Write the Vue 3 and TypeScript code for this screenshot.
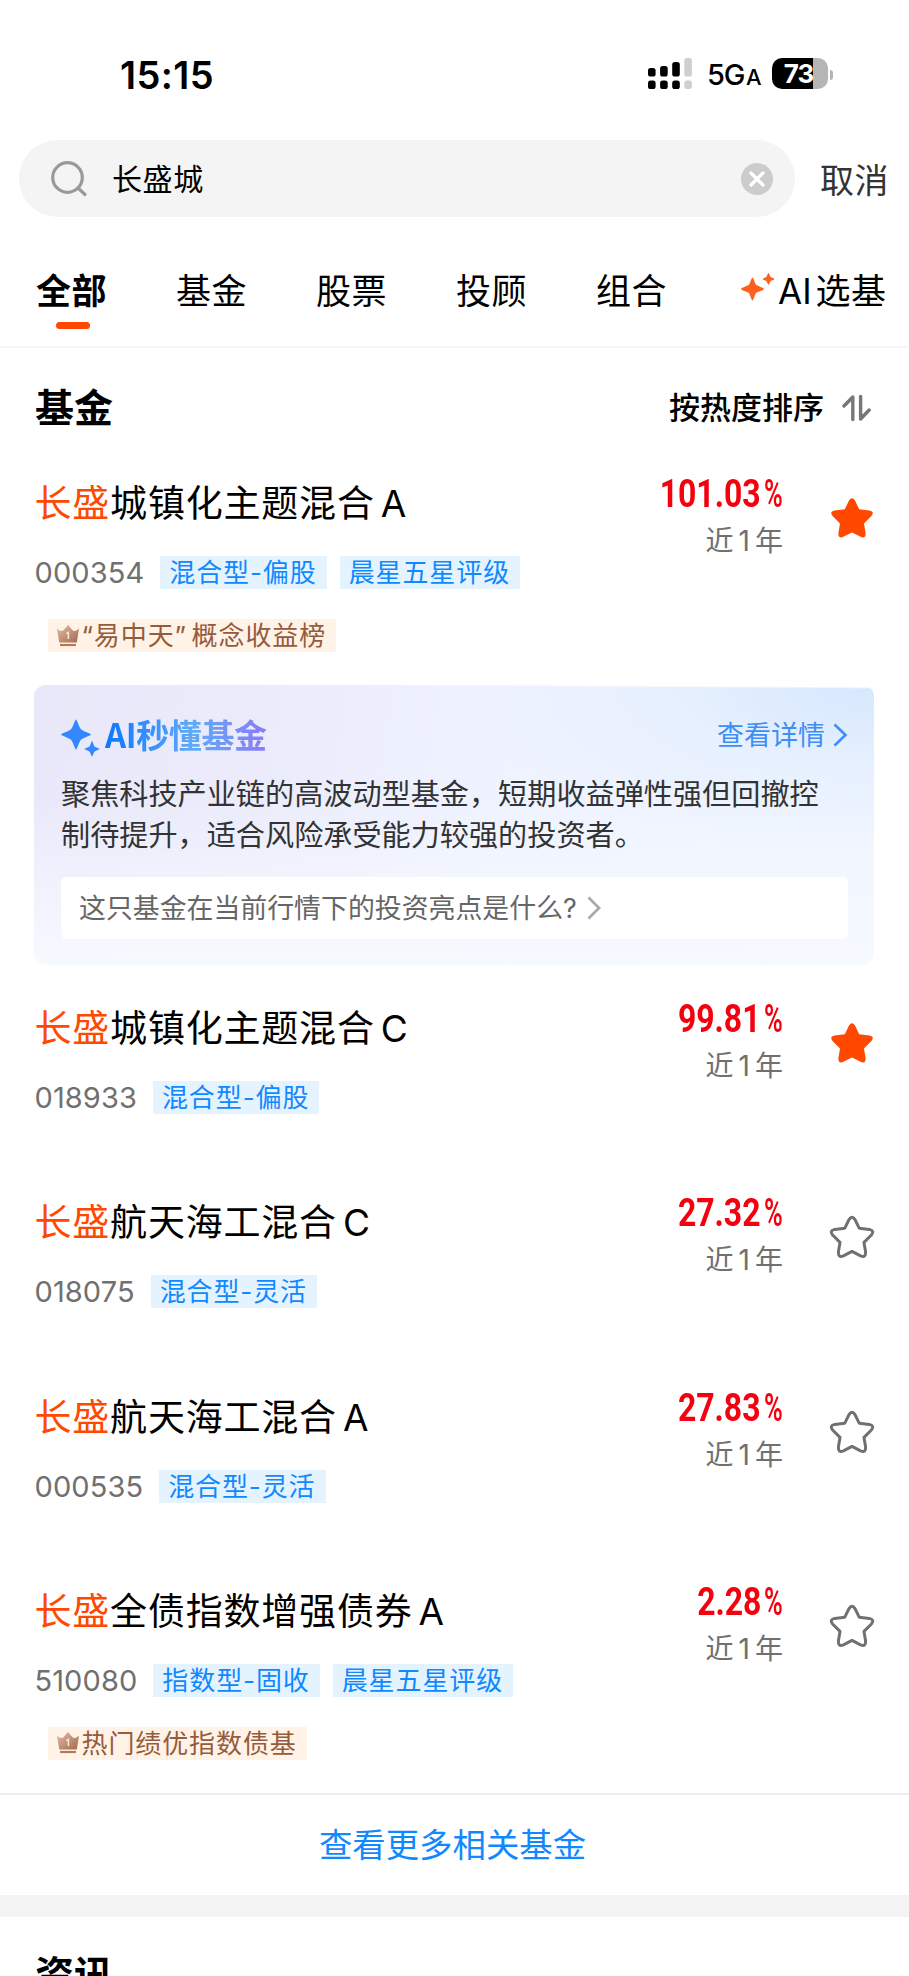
<script setup lang="ts">
interface Fund {
  rest: string
  share: string
  code: string
  tags: string[]
  rank?: string
  value: string
  starred: boolean
  insight?: boolean
}

const tabs: string[] = ['全部', '基金', '股票', '投顾', '组合']

const funds: Fund[] = [
  { rest: '城镇化主题混合', share: 'A', code: '000354', tags: ['混合型-偏股', '晨星五星评级'], rank: '“易中天” 概念收益榜', value: '101.03', starred: true, insight: true },
  { rest: '城镇化主题混合', share: 'C', code: '018933', tags: ['混合型-偏股'], value: '99.81', starred: true },
  { rest: '航天海工混合', share: 'C', code: '018075', tags: ['混合型-灵活'], value: '27.32', starred: false },
  { rest: '航天海工混合', share: 'A', code: '000535', tags: ['混合型-灵活'], value: '27.83', starred: false },
  { rest: '全债指数增强债券', share: 'A', code: '510080', tags: ['指数型-固收', '晨星五星评级'], rank: '热门绩优指数债基', value: '2.28', starred: false },
]

const signal: number[] = [8.5, 10.5, 14.5, 18.5]
</script>

<template>
  <main class="app">
    <header class="status">
      <span class="clock">15:15</span>
      <div class="status-right">
        <svg class="signal" width="45" height="31" viewBox="0 0 45 31">
          <g v-for="(h, i) in signal" :key="i" :fill="i === 3 ? '#cfcfcf' : '#000'">
            <rect :x="i * 12.1" :y="18.5 - h" width="7.6" :height="h" rx="2.6" />
            <rect :x="i * 12.1" y="22.5" width="7.6" height="8.5" rx="2.6" />
          </g>
        </svg>
        <span class="net">5G<small>A</small></span>
        <div class="battery"><span>73</span></div>
        <i class="nub"></i>
      </div>
    </header>

    <div class="search-row">
      <div class="search">
        <svg class="lens" width="38" height="38" viewBox="0 0 38 38" fill="none" stroke="#999" stroke-width="3.2">
          <circle cx="17.5" cy="17.5" r="14.8" />
          <path d="M28 28L35 34.5" stroke-linecap="round" />
        </svg>
        <span class="query">长盛城</span>
        <svg class="clear" width="32" height="32" viewBox="0 0 32 32">
          <circle cx="16" cy="16" r="16" fill="#ccc" />
          <path d="M10 10L22 22M22 10L10 22" stroke="#fff" stroke-width="3.2" stroke-linecap="round" />
        </svg>
      </div>
      <span class="cancel">取消</span>
    </div>

    <nav class="tabs">
      <span v-for="(t, i) in tabs" :key="t" class="tab" :class="{ active: i === 0 }">{{ t }}</span>
      <span class="tab ai-tab">
        <svg width="34" height="30" viewBox="0 0 34 30" fill="#ff5f1f">
          <path d="M11.5 5.5C12.5 5.5 13.9 11.2 15 12.8C16.8 14.1 23 15.8 23 17C23 18.2 16.8 19.8 15 21C13.9 22.7 12.5 28.5 11.5 28.5C10.5 28.5 9.1 22.7 8 21C6.2 19.8 0 18.2 0 17C0 15.8 6.2 14.1 8 12.8C9.1 11.2 10.5 5.5 11.5 5.5Z" />
          <path d="M27.5 1C28 1 29 4 29.7 4.9C30.6 5.6 33.5 6.4 33.5 7C33.5 7.6 30.6 8.3 29.7 9C29 10 28 12.8 27.5 12.8C27 12.8 26 10 25.3 9C24.4 8.3 21.6 7.6 21.6 7C21.6 6.4 24.4 5.6 25.3 4.9C26 4 27 1 27.5 1Z" />
        </svg>
        <span class="latin">AI</span>选基
      </span>
    </nav>

    <section class="head">
      <h2>基金</h2>
      <div class="sort">
        <span>按热度排序</span>
        <svg width="29" height="28" viewBox="0 0 29 28" fill="none" stroke="#777" stroke-width="3.4" stroke-linecap="round" stroke-linejoin="round">
          <path d="M2 12L10.8 3V25.5" />
          <path d="M18.6 2.5V25L27.2 16" />
        </svg>
      </div>
    </section>

    <template v-for="f in funds" :key="f.code">
      <article class="fund" :class="{ ranked: f.rank }">
        <div class="info">
          <h3><em>长盛</em>{{ f.rest }}<b>{{ f.share }}</b></h3>
          <div class="meta">
            <span class="code">{{ f.code }}</span>
            <span v-for="t in f.tags" :key="t" class="tag">{{ t }}</span>
          </div>
          <div v-if="f.rank" class="rank">
            <svg width="22" height="22" viewBox="0 0 22 22">
              <defs>
                <linearGradient :id="'crown' + f.code" x1="0" y1="0" x2="1" y2="1">
                  <stop offset="0" stop-color="#e3bda8" />
                  <stop offset="1" stop-color="#a4694a" />
                </linearGradient>
              </defs>
              <path d="M0 3.5Q3.5 7 6.2 5.6L11 0L15.8 5.6Q18.5 7 22 3.5L19.8 17.4H2.2Z" :fill="'url(#crown' + f.code + ')'" />
              <path d="M3 20H19" stroke="#b27a5c" stroke-width="2.2" />
              <path d="M9.3 8.6L11.4 7.4V14" fill="none" stroke="#f7e6dc" stroke-width="1.6" />
            </svg>
            <span>{{ f.rank }}</span>
          </div>
        </div>
        <div class="gain">
          <div class="pct"><span class="num">{{ f.value }}</span><span class="sign">%</span></div>
          <div class="period">近<i>1</i>年</div>
        </div>
        <svg class="star" width="46" height="44" viewBox="0 0 46 44">
          <path
            d="M20 4.6Q23 -0.2 26 4.6L30.2 13.2L40.4 14.4Q46 15.6 42.4 20L35 27.4L36.6 37Q37 43 31.6 40.8L23 36.4L14.4 40.8Q9 43 9.4 37L11 27.4L3.6 20Q0 15.6 5.6 14.4L15.8 13.2Z"
            :fill="f.starred ? '#ff4800' : 'none'"
            :stroke="f.starred ? 'none' : '#707070'"
            stroke-width="3"
            stroke-linejoin="round"
          />
        </svg>
      </article>

      <section v-if="f.insight" class="card">
        <div class="card-head">
          <svg width="39" height="38" viewBox="0 0 39 38" fill="#3388ff">
            <path d="M15 0.5C16 0.5 18 8 20 10.2C22.2 12.4 30 14.5 30 15.5C30 16.5 22.2 18.6 20 20.8C18 23 16 30.5 15 30.5C14 30.5 12 23 10 20.8C7.8 18.6 0 16.5 0 15.5C0 14.5 7.8 12.4 10 10.2C12 8 14 0.5 15 0.5Z" />
            <path d="M31 22C31.6 22 32.5 26 33.4 27.2C34.4 28.3 38.6 29.3 38.6 30C38.6 30.7 34.4 31.6 33.4 32.7C32.5 33.8 31.6 37.4 31 37.4C30.4 37.4 29.5 33.8 28.6 32.7C27.6 31.6 23.5 30.7 23.5 30C23.5 29.3 27.6 28.3 28.6 27.2C29.5 26 30.4 22 31 22Z" />
          </svg>
          <strong>AI秒懂基金</strong>
          <span class="detail">查看详情</span>
          <svg width="15" height="24" viewBox="0 0 15 24" fill="none" stroke="#3d8ef8" stroke-width="2.6"><path d="M1.5 1.5L12.5 12L1.5 22.5" /></svg>
        </div>
        <p>聚焦科技产业链的高波动型基金，短期收益弹性强但回撤控<br />制待提升，适合风险承受能力较强的投资者。</p>
        <div class="ask">
          <span>这只基金在当前行情下的投资亮点是什么<i>?</i></span>
          <svg width="14" height="24" viewBox="0 0 14 24" fill="none" stroke="#aaa" stroke-width="2.8"><path d="M1.5 1.5L12 12L1.5 22.5" /></svg>
        </div>
      </section>
    </template>

    <div class="more">查看更多相关基金</div>
    <section class="news"><h2>资讯</h2></section>
  </main>
</template>

<style>
body {
  margin: 0;
  background: #fff;
}
</style>

<style scoped>
.app {
  width: 909px;
  height: 1976px;
  overflow: hidden;
  background: #fff;
  color: #000;
  font-family: Inter, "Noto Sans CJK SC", sans-serif;
  display: flex;
  flex-direction: column;
}
.app > * {
  flex-shrink: 0;
  box-sizing: border-box;
}
h2, h3, p {
  margin: 0;
  font-weight: 400;
}
em, i {
  font-style: normal;
}
svg {
  flex: none;
  display: block;
}
.status {
  height: 140px;
  padding: 9px 76px 0 120px;
  display: flex;
  align-items: center;
  justify-content: space-between;
}
.clock {
  font-size: 38px;
  font-weight: 600;
  letter-spacing: 0.4px;
}
.status-right {
  display: flex;
  align-items: center;
}
.signal {
  margin-top: -2px;
}
.net {
  margin-left: 14px;
  width: 65px;
  font-size: 29px;
  font-weight: 500;
  letter-spacing: -1.3px;
  white-space: nowrap;
}
.net small {
  font-size: 22px;
  margin-left: 2px;
}
.battery {
  width: 56px;
  height: 31px;
  margin-top: -2px;
  border-radius: 10px;
  background: linear-gradient(90deg, #000 41px, #b5b5b5 41px);
  color: #fff;
  font-size: 26px;
  font-weight: 700;
  line-height: 31px;
  text-align: center;
  letter-spacing: -1px;
}
.battery span {
  margin-right: 3px;
}
.nub {
  width: 3px;
  height: 10px;
  margin-left: 2px;
  border-radius: 0 4px 4px 0;
  background: #b5b5b5;
}
.search-row {
  height: 77px;
  padding-left: 19px;
  display: flex;
  align-items: center;
}
.search {
  width: 776px;
  height: 77px;
  box-sizing: border-box;
  border-radius: 39px;
  background: #f4f4f4;
  padding: 0 22px 0 31px;
  display: flex;
  align-items: center;
}
.query {
  flex: 1;
  margin: -3px 0 0 24px;
  font-size: 30px;
  letter-spacing: 0.6px;
}
.cancel {
  margin: 0 0 0 25px;
  font-size: 34px;
  color: #333;
  letter-spacing: 0.5px;
}
.tabs {
  height: 131px;
  padding: 52px 0 0 36px;
  border-bottom: 2px solid #f6f6f6;
  display: flex;
}
.tab {
  width: 140px;
  flex: none;
  font-size: 35px;
  line-height: 44px;
  white-space: nowrap;
  letter-spacing: 0.5px;
}
.active {
  font-weight: 700;
}
.active::after {
  content: "";
  display: block;
  width: 34px;
  height: 7px;
  margin: 9px 0 0 20px;
  border-radius: 4px;
  background: #ff4800;
}
.ai-tab {
  margin-left: 5px;
  width: 160px;
  display: flex;
}
.ai-tab svg {
  margin-top: 3px;
}
.latin {
  margin: 0 4px 0 3px;
  letter-spacing: 0;
}
.head {
  height: 127px;
  padding: 0 38px 8px 35px;
  display: flex;
  align-items: center;
  justify-content: space-between;
}
h2 {
  font-size: 39px;
  line-height: 50px;
  font-weight: 700;
}
.sort {
  display: flex;
  align-items: center;
  gap: 18px;
  font-size: 31px;
  font-weight: 500;
}
.sort span {
  margin-top: -4px;
}
.fund {
  height: 194.33px;
  padding: 7px 0 0 34.5px;
  display: flex;
}
.fund.ranked {
  height: 210px;
}
.info {
  flex: 1;
}
h3 {
  font-size: 37px;
  line-height: 44px;
  letter-spacing: 0.8px;
  white-space: nowrap;
}
h3 em {
  color: #ff4800;
}
h3 b {
  font-weight: 400;
  margin-left: 6px;
}
.meta {
  margin-top: 30px;
  display: flex;
  align-items: center;
  height: 33px;
}
.code {
  font-size: 29px;
  letter-spacing: 0.1px;
  color: #707070;
  margin-right: 3px;
}
.tag {
  margin-left: 13px;
  padding: 0 10px 0 9px;
  height: 33px;
  line-height: 33px;
  font-size: 26px;
  letter-spacing: 0.9px;
  color: #1089ff;
  background: #e5f3ff;
  white-space: nowrap;
}
.rank {
  width: max-content;
  margin: 30px 0 0 13px;
  height: 33px;
  line-height: 33px;
  padding: 0 10px 0 9px;
  display: flex;
  align-items: center;
  gap: 3px;
  font-size: 26px;
  letter-spacing: 0.9px;
  word-spacing: -3.5px;
  color: #965b3c;
  background: #fff3e8;
  white-space: nowrap;
}
.gain {
  width: 160px;
  text-align: right;
}
.pct {
  height: 36px;
  margin-top: -6px;
  display: flex;
  justify-content: flex-end;
  color: #f5000f;
  font-family: Roboto, sans-serif;
  font-size: 38.5px;
  line-height: 36px;
  font-weight: 700;
}
.num {
  transform: scaleX(0.83);
  transform-origin: right;
}
.sign {
  width: 19px;
  font-weight: 600;
  transform: scaleX(0.66);
  transform-origin: left;
  margin-left: 3px;
}
.period {
  margin-top: 11px;
  font-size: 28px;
  line-height: 36px;
  color: #707070;
}
.period i {
  margin: 0 5px;
}
.star {
  margin: 14px 34px 0 46px;
}
.card {
  width: 840px;
  height: 280px;
  margin: 0 0 35px 34px;
  padding: 34px 26px 0 27px;
  border-radius: 12px;
  background:
    linear-gradient(180.4deg, #fff 0, #fff 2px, rgba(255, 255, 255, 0) 4px),
    linear-gradient(180deg, rgba(246, 250, 255, 0) 40%, #f6faff 100%),
    radial-gradient(ellipse 420px 170px at 100% 0, #d6e7fe 0%, rgba(226, 238, 254, 0.6) 50%, rgba(236, 244, 254, 0) 100%),
    linear-gradient(100deg, #e9e8fa 0%, #ebebfb 25%, #eff3ff 55%, #eff5ff 100%);
}
.card-head {
  height: 38px;
  display: flex;
}
.card-head strong {
  margin-left: 5px;
  flex: none;
  font-family: "Noto Sans CJK SC", sans-serif;
  font-size: 33px;
  line-height: 30px;
  font-weight: 700;
  letter-spacing: -0.4px;
  background: linear-gradient(90deg, #0d78ff, #60aaf8 55%, #8b7bf8);
  background-clip: text;
  -webkit-background-clip: text;
  color: transparent;
}
.detail {
  margin: 0 8px 0 auto;
  font-size: 27px;
  line-height: 33px;
  color: #3d8ef8;
}
.card-head > svg:last-child {
  margin-top: 4px;
}
p {
  margin-top: 17px;
  font-size: 29.15px;
  line-height: 41px;
  color: #333;
  white-space: nowrap;
}
.ask {
  height: 62px;
  margin-top: 21px;
  padding-left: 18px;
  border-radius: 5px;
  background: #fff;
  display: flex;
  align-items: center;
  gap: 10px;
  font-size: 26.9px;
  color: #666;
}
.ask span {
  margin-top: -3px;
}
.more {
  height: 124px;
  border-top: 2px solid #ededed;
  border-bottom: 22px solid #f4f4f4;
  text-align: center;
  font-size: 33.4px;
  line-height: 100px;
  color: #1089ff;
  padding-right: 4px;
}
.news {
  padding: 33px 0 0 35px;
}
</style>
